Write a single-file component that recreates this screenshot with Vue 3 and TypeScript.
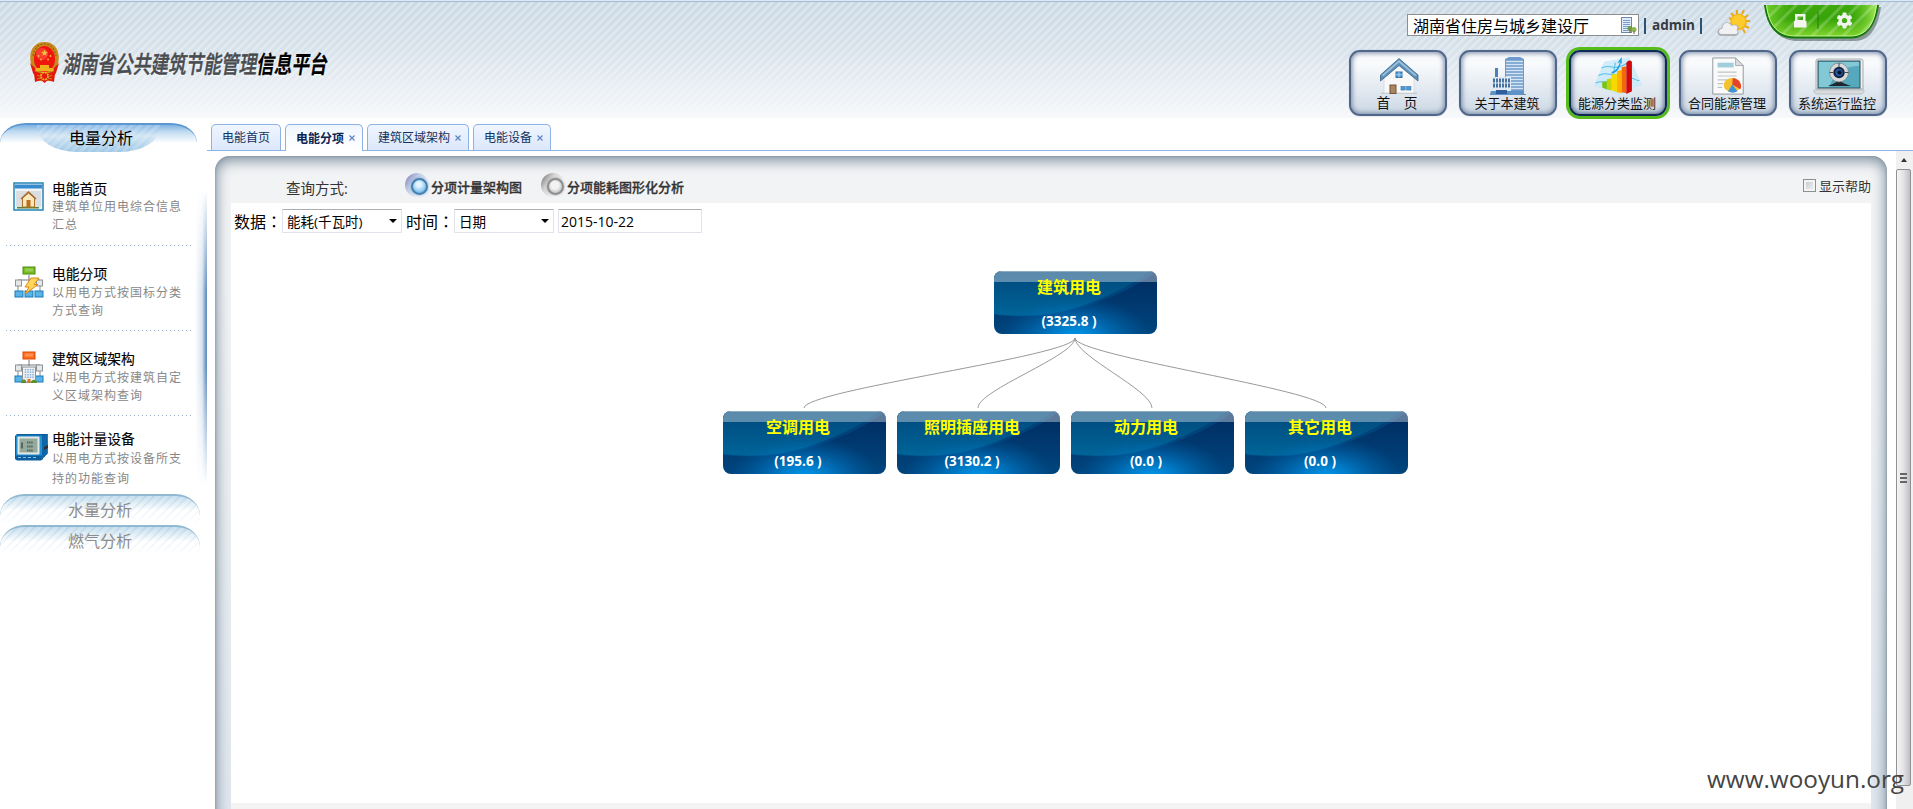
<script setup lang="ts">
interface NavItem { id: string; label: string; active?: boolean }
interface MenuItem { id: string; title: string; lines: string[] }
interface Tab { label: string; closable: boolean; active?: boolean }
interface TreeNode { id: number; x: number; y: number; name: string; value: string }

const navItems: NavItem[] = [
  { id: 'home', label: '首\u3000页' },
  { id: 'building', label: '关于本建筑' },
  { id: 'chart', label: '能源分类监测', active: true },
  { id: 'report', label: '合同能源管理' },
  { id: 'monitor', label: '系统运行监控' },
]

const menuItems: MenuItem[] = [
  { id: 'm-home', title: '电能首页', lines: ['建筑单位用电综合信息', '汇总'] },
  { id: 'm-item', title: '电能分项', lines: ['以用电方式按国标分类', '方式查询'] },
  { id: 'm-area', title: '建筑区域架构', lines: ['以用电方式按建筑自定', '义区域架构查询'] },
  { id: 'm-meter', title: '电能计量设备', lines: ['以用电方式按设备所支', '持的功能查询'] },
]

const tabs: Tab[] = [
  { label: '电能首页', closable: false },
  { label: '电能分项', closable: true, active: true },
  { label: '建筑区域架构', closable: true },
  { label: '电能设备', closable: true },
]

const nodes: TreeNode[] = [
  { id: 0, x: 763, y: 68, name: '建筑用电', value: '(3325.8 )' },
  { id: 1, x: 492, y: 208, name: '空调用电', value: '(195.6 )' },
  { id: 2, x: 666, y: 208, name: '照明插座用电', value: '(3130.2 )' },
  { id: 3, x: 840, y: 208, name: '动力用电', value: '(0.0 )' },
  { id: 4, x: 1014, y: 208, name: '其它用电', value: '(0.0 )' },
]

const links = nodes.slice(1).map((n) => {
  const x = n.x + 81
  return `M844 135 C844 153 ${x} 187 ${x} 205`
})
</script>

<template>
  <div class="page">
    <header class="header">
      <div class="brand">
        <svg class="emblem" width="29" height="41" viewBox="0 0 29 41">
          <path d="M4 27 L1 22 C-2 9 4 0 14.500 0 C25 0 31 9 28 22 L25 27 L24 39 L5 39 Z" fill="#c98a1c" />
          <path d="M3 14 C5 5 9 2 14.500 2 C20 2 24 5 26 14" fill="none" stroke="#8e6212" stroke-width="1.200" stroke-dasharray="2 1.500" />
          <ellipse cx="14.500" cy="17" rx="10.500" ry="13" fill="#f0150f" />
          <ellipse cx="12" cy="12" rx="6" ry="6" fill="#ff5a45" opacity=".6" />
          <path d="M0 21 L5 26 L5 34 L3 31 Z M29 21 L24 26 L24 34 L26 31 Z" fill="#e3180f" />
          <path d="M4 29 L10 31 L19 31 L25 29 L24 40 L18 38 L14.500 41 L11 38 L5 40 Z" fill="#e3180f" />
          <path d="M14.500 7.500 l1 2.300 2.400.1-1.900 1.500.7 2.400-2.200-1.400-2.200 1.400.7-2.400-1.900-1.500 2.400-.1z" fill="#e9c63c" />
          <g fill="#e9b83c"><circle cx="8.500" cy="14" r="1" /><circle cx="20.500" cy="14" r="1" /><circle cx="11" cy="17.500" r="1" /><circle cx="18" cy="17.500" r="1" /></g>
          <path d="M6 29 h17 v-3 h-4 v-3 h-9 v3 h-4z" fill="#eeb21c" />
          <circle cx="14.500" cy="34" r="3.600" fill="none" stroke="#f0b71f" stroke-width="1.800" stroke-dasharray="2 .8" />
          <path d="M7 33 l4 2 M22 33 l-4 2 M7 37 l4-1 M22 37 l-4-1" stroke="#c98a1c" />
        </svg>
        <h1 class="title"><span>湖南省公共建筑节能管理</span><b>信息平台</b></h1>
      </div>

      <div class="head-right">
        <div class="user-row">
          <div class="org">
            <span>湖南省住房与城乡建设厅</span>
            <svg width="16" height="17" viewBox="0 0 16 17">
              <rect x=".5" y=".5" width="10" height="15" fill="#dfeafa" stroke="#6d87ad" />
              <path d="M2 3.500h7M2 5.500h7M2 7.500h7M2 9.500h7M2 11.500h5M2 13.500h5" stroke="#7d9bc8" />
              <circle cx="9" cy="11.500" r="2.500" fill="#6f9a3f" /><circle cx="13" cy="12.500" r="2.500" fill="#8db252" />
              <path d="M9 13v3M13 14v3" stroke="#6c5430" />
            </svg>
          </div>
          <span class="bar"></span><span class="admin">admin</span><span class="bar"></span>
        </div>
        <svg class="weather" width="34" height="28" viewBox="0 0 34 28">
          <path d="M20 1v4M14 4l3 3M27 1l-2 4M31 6l-4 3M33 12h-5M32 19l-4-2M28 24l-2-4M12 9l5 2" stroke="#eca818" stroke-width="2" />
          <circle cx="21.500" cy="13" r="8.300" fill="#f5b411" /><circle cx="21.500" cy="12.500" r="6.800" fill="#fdcc2c" />
          <path d="M5 27 C-1 27 -1 20 4.500 19 C5 13 12 11 15 16 C20 14 24 18 20.500 21 C23 23 21 27 18 27 Z" fill="#aeb1b6" />
          <path d="M5 25 C1 25 1 20 5.500 19.500 C5.500 13.500 12 12 14.500 17 C19 15 22 18 19.500 21 C22 23 20 25 18 25 Z" fill="#f1f1f3" />
        </svg>
        <svg class="tray" width="122" height="37" viewBox="0 0 122 37">
          <defs>
            <linearGradient id="tg" x2="0" y2="1"><stop offset="0" stop-color="#3fa80b" /><stop offset=".45" stop-color="#36a408" /><stop offset="1" stop-color="#80d42c" /></linearGradient>
            <linearGradient id="te" x2="1" y2="0"><stop offset="0" stop-color="#8ade3a" stop-opacity=".7" /><stop offset=".25" stop-color="#5cc41c" stop-opacity="0" /><stop offset=".75" stop-color="#5cc41c" stop-opacity="0" /><stop offset="1" stop-color="#b2f060" stop-opacity=".9" /></linearGradient>
            <pattern id="ts" width="11" height="11" patternUnits="userSpaceOnUse" patternTransform="rotate(45)"><rect width="3" height="11" fill="#fff" opacity=".2" /></pattern>
          </defs>
          <path d="M3 2 C6 24 16 36 35 36 L92 36 C107 36 115 22 118 2 Z" fill="#4b5a57" opacity=".55" />
          <path d="M1 0 C4 22 13 33.500 32 33.500 L88 33.500 C104 33.500 113 20 116 0 Z" fill="#14790a" />
          <path d="M3 0 C6 21 15 31 33 31 L87 31 C104 31 111 19 114 0 Z" fill="url(#tg)" />
          <path d="M3 0 C6 21 15 31 33 31 L87 31 C104 31 111 19 114 0 Z" fill="url(#te)" />
          <path d="M3 0 C6 21 15 31 33 31 L87 31 C104 31 111 19 114 0 Z" fill="url(#ts)" />
          <path d="M3.500 0 C6 21 15 31 33 31 L87 31 C104 31 111 19 113.500 0" fill="none" stroke="#c4f590" />
          <path d="M55 7v17" stroke="#287b08" />
          <path d="M32 16 V9 h10.500 V16 h1 v6.500 h-12.500 v-6.500z M34.500 11.500 v3.500 h5.500 v-3.500z" fill="#f5f5f0" fill-rule="evenodd" />
          <g transform="translate(81.500 15.500)" fill="#f1f3ee"><circle r="6" /><g><rect x="-2" y="-8" width="4" height="16" rx="1" /><rect x="-2" y="-8" width="4" height="16" rx="1" transform="rotate(60)" /><rect x="-2" y="-8" width="4" height="16" rx="1" transform="rotate(120)" /></g><circle r="2.600" fill="#43a90f" /></g>
        </svg>
        <nav class="nav">
          <button v-for="n in navItems" :key="n.id" class="nav-btn" :class="[n.id, { active: n.active }]">
            <svg v-if="n.id === 'home'" width="54" height="38" viewBox="0 0 54 38">
              <path d="M10 35.500h36v1.500H10z" fill="#c7cbd0" />
              <path d="M13 18 L28 5 L43 18 V36 H13Z" fill="#f8f8f9" stroke="#d0d4d8" stroke-width=".7" />
              <path d="M28 1.500 L47 18 V24 L28 8.500 L9.500 24 V18Z" fill="#5c8fb9" stroke="#3b6488" stroke-width=".8" />
              <path d="M28 3 L46 18.500 L44 19 L28 5.500 L12.500 19 L10.500 18.500Z" fill="#9cc0dc" />
              <rect x="25" y="15" width="6" height="5.500" fill="#4c9bdc" stroke="#35719f" /><path d="M28 15v5.500M25 17.700h6" stroke="#bfe0f6" stroke-width=".7" />
              <rect x="19" y="28" width="6" height="8.500" fill="#a98560" stroke="#715437" />
              <g fill="#4c9bdc" stroke="#3d7caf" stroke-width=".7"><rect x="30" y="29.500" width="4.200" height="3.500" /><rect x="35.700" y="29.500" width="4.200" height="3.500" /></g>
            </svg>
            <svg v-else-if="n.id === 'building'" width="54" height="38" viewBox="0 0 54 38">
              <path d="M24 2 L28 0 H39 L43 2 V38 H24Z" fill="#6e9bcb" />
              <path d="M25 4.500h17M25 7.500h17M25 10.500h17M25 13.500h17M25 16.500h17M25 19.500h17M25 22.500h17M25 25.500h17M25 28.500h17M25 31.500h17" stroke="#d4e4f4" stroke-width="1.700" />
              <path d="M11 20h19v16H11z" fill="#dfeaf5" /><path d="M14 11h3v9h-3z" fill="#4c80b8" />
              <path d="M12 23.500h18M12 28.500h18" stroke="#47719f" stroke-width="4" stroke-dasharray="2 1" />
              <path d="M10 34h33v3h2v1H9v-1z" fill="#5e91c6" /><path d="M15 33h11v4H15z" fill="#2f609d" />
            </svg>
            <svg v-else-if="n.id === 'chart'" width="54" height="41" viewBox="0 0 54 41">
              <path d="M12 5 L39 0 L53 30 L28 41 L1 31Z" fill="#c8e8f8" opacity=".8" />
              <path d="M9 12 C18 6 22 17 38 6 M6 20 C15 14 21 24 32 16 M3 28 C14 23 18 33 29 27 M38 24 C44 20 46 27 50 25 M24 6 L20 34" fill="none" stroke="#56bfe8" stroke-width="1.200" />
              <path d="M20 16 C25 15 28 10 29 5 L26 7 L31 0 L31 8 L30 6 C29 12 26 17 20 18Z" fill="#1b9be3" />
              <path d="M10 27 l5-1v9 l-5-2z" fill="#77c411" /><path d="M15 24l5-1v13l-5-1z" fill="#bed50c" /><path d="M20 19l6-1v20l-6-2z" fill="#f7d900" /><path d="M26 15l5-1v25l-5-1z" fill="#ffaf05" /><path d="M31 11l5-1v29l-5-1z" fill="#f36707" />
              <path d="M36 7c1-4 6-4 6-1v31l-6 3z" fill="#d2060b" />
            </svg>
            <svg v-else-if="n.id === 'report'" width="54" height="40" viewBox="0 0 54 40">
              <path d="M11 1 H35 L43 9 V39 H11Z" fill="#fafafa" stroke="#8f9398" /><path d="M35 1v8h8z" fill="#dcdddf" stroke="#a7a9ad" />
              <path d="M16 6h17v5H16z" fill="#a2cddd" /><path d="M16 16h20M16 20h20M16 24h13M16 28h6M16 32h5" stroke="#bfc3c7" stroke-width="1.300" />
              <ellipse cx="31.500" cy="29.500" rx="9" ry="7.500" fill="#f7c12c" /><path d="M31.500 29 L32 22 C40 23 42 30 40 34Z" fill="#e7422d" /><path d="M31.500 29 L37 36 C34 38 30 38 27 36Z" fill="#3f94d8" />
            </svg>
            <svg v-else width="54" height="38" viewBox="0 0 54 38">
              <path d="M5 4 q0-2 2-2 H50 q2 0 2 2 V32 H5Z" fill="#eef0f2" stroke="#a6acb1" /><rect x="7" y="4" width="42" height="27" fill="#55a9bd" stroke="#33515d" />
              <path d="M8 5 h40 v4 Q26 9 18 30 H8Z" fill="#97d6e0" opacity=".7" /><path d="M3 33h50v2l-2 2H5l-2-2z" fill="#d9dcdf" stroke="#a9aeb2" stroke-width=".6" />
              <path d="M17 29 C21 27 25 26 28 23 C31 26 35 27 40 29Z" fill="#20262b" />
              <circle cx="28" cy="15.500" r="9.500" fill="#d7d9dc" stroke="#777c82" stroke-width=".7" /><circle cx="28" cy="15.500" r="5.700" fill="#16243c" /><circle cx="28" cy="15.500" r="3.700" fill="#1e57a8" /><circle cx="28.500" cy="15.500" r="2" fill="#08101c" /><path d="M28 6v4M18.500 15.500h4M33.500 15.500h4" stroke="#454b52" />
            </svg>
            <span>{{ n.label }}</span>
          </button>
        </nav>
      </div>
    </header>

    <div class="body">
      <aside class="side">
        <div class="side-head"><div class="pill">电量分析</div></div>
        <ul class="menu">
          <li v-for="m in menuItems" :key="m.id" :class="m.id">
            <div class="menu-icon">
              <svg v-if="m.id === 'm-home'" width="36" height="32" viewBox="0 0 36 32">
                <rect x="1" y="1" width="29" height="27" fill="#f3f4f5" stroke="#2584b4" stroke-width="1.500" /><rect x="2" y="2.500" width="27" height="4" fill="#368bd0" /><path d="M3 9h25v16H3z" fill="#dbdee1" />
                <path d="M4 25h22v1.500H4z" fill="#55852e" /><path d="M9.500 16 L15.500 11 L21.500 16 V25H9.500Z" fill="#fae8bd" stroke="#b07126" /><path d="M8 17 L15.500 10 L23 17" fill="none" stroke="#aa6a2e" stroke-width="1.600" /><path d="M13.500 18h4v7h-4z" fill="#bb701d" />
              </svg>
              <svg v-else-if="m.id === 'm-meter'" width="36" height="32" viewBox="0 0 36 32">
                <path d="M4 1 H35 V20 L28 27.500 H4 L2 26 V3Z" fill="#0d5c9c" /><path d="M27 5 L35 1V20l-7 7z" fill="#1581c8" /><path d="M33 2v20M31 3v21M29 4v23" stroke="#083f75" stroke-width=".8" /><path d="M31 14l4-2v3l-4 2z" fill="#302f34" />
                <path d="M3 2.500h26v20H3z" fill="#2191d4" /><rect x="4.500" y="3.500" width="22" height="18" rx="1" fill="#e2e8e3" /><rect x="6.500" y="5.500" width="18" height="14" fill="#95a99d" />
                <path d="M9 9.500v6" stroke="#55675e" stroke-width="2" /><path d="M14 9.500h6M14 13.500h6M14 17.500h6" stroke="#55675e" stroke-width="2" stroke-dasharray="1.500 .6" /><path d="M5 24.500h20" stroke="#7dc5ef" stroke-width="1" stroke-dasharray="3 2" />
              </svg>
              <svg v-else width="36" height="34" viewBox="0 0 36 34">
                <path d="M16 9v6M5 17v-3h22v3" fill="none" stroke="#77797c" />
                <rect x="10" y="1" width="12" height="7" :fill="m.id === 'm-item' ? '#78bd1c' : '#ff6c1c'" :stroke="m.id === 'm-item' ? '#4d8a15' : '#db4a08'" /><path d="M12 2.500h8v3h-8z" fill="#fff" opacity=".25" />
                <g fill="#e5e7e9" stroke="#8f9498"><rect x="2.500" y="14" width="6" height="6" /><rect x="23.500" y="14" width="6" height="6" /></g><path d="M5 20v5M27 20v5M16 20v5" stroke="#888" />
                <g fill="#58b4e8" stroke="#1c78b6"><rect x="2" y="25" width="8" height="6" /><rect x="12" y="25" width="8" height="6" /><rect x="22" y="25" width="8" height="6" /></g>
                <path v-if="m.id === 'm-item'" d="M18 12 L26 12 L21 18.500 H25 L12 28 L16 21 H12Z" fill="#ffd65c" stroke="#dc8a14" />
                <g v-else><rect x="9.500" y="16" width="13" height="15" fill="#eef1f3" stroke="#8a8f94" /><path d="M12.500 18v9M15 18v9M17.500 18v9M20 18v9" stroke="#8cb0d6" stroke-width="1.500" stroke-dasharray="1.500 1" /><path d="M8 31c1-3 4-3 5-1v2H8zM18 31c1-3 5-3 6 0v1h-6z" fill="#5f9029" /><path d="M14.500 28h3v4h-3z" fill="#d7791b" /></g>
              </svg>
            </div>
            <div class="menu-text">
              <h2>{{ m.title }}</h2>
              <p v-for="l in m.lines" :key="l">{{ l }}</p>
            </div>
          </li>
        </ul>
        <div class="side-foot">水量分析</div>
        <div class="side-foot">燃气分析</div>
        <div class="splitter"></div>
      </aside>

      <main class="main">
        <div class="tabs">
          <div v-for="t in tabs" :key="t.label" class="tab" :class="{ on: t.active }">
            <span>{{ t.label }}</span>
            <svg v-if="t.closable" width="6" height="6" viewBox="0 0 6 6"><path d="M.5.5l5 5M5.500.5l-5 5" stroke="#5c84c4" stroke-width="1.200" /></svg>
          </div>
        </div>
        <div class="view">
          <section class="panel">
            <div class="modes">
              <span class="mode-label">查询方式:</span>
              <span class="orb blue"><i></i></span><b class="first">分项计量架构图</b>
              <span class="orb"><i></i></span><b>分项能耗图形化分析</b>
              <label class="help"><span class="check"></span>显示帮助</label>
            </div>
            <div class="content">
              <div class="filters">
                <span class="f-label">数据<span class="colon">：</span></span>
                <div class="select energy"><span>能耗(千瓦时)</span><i></i></div>
                <span class="f-label">时间<span class="colon">：</span></span>
                <div class="select period"><span>日期</span><i></i></div>
                <div class="select date"><span>2015-10-22</span></div>
              </div>
              <svg class="links" width="1640" height="300" viewBox="0 0 1640 300">
                <path v-for="d in links" :key="d" :d="d" fill="none" stroke="#999" stroke-width="1" />
              </svg>
              <div v-for="n in nodes" :key="n.id" class="node" :style="{ left: n.x + 'px', top: n.y + 'px' }">
                <svg class="node-bg" width="163" height="63" viewBox="0 0 163 63">
                  <defs>
                    <linearGradient :id="'sw' + n.id" x2="0" y2="1"><stop offset="0" stop-color="#00497c" /><stop offset="1" stop-color="#006a9d" /></linearGradient>
                    <radialGradient :id="'gl' + n.id" gradientUnits="userSpaceOnUse" cx="0" cy="0" r="1" gradientTransform="translate(81 66) scale(76 40)"><stop offset="0" stop-color="#0099ee" /><stop offset=".3" stop-color="#0086d6" stop-opacity=".85" /><stop offset="1" stop-color="#0066b0" stop-opacity="0" /></radialGradient>
                    <linearGradient :id="'bs' + n.id" x2="0" y2="1"><stop offset="0" stop-color="#002c60" /><stop offset="1" stop-color="#00457d" /></linearGradient>
                  </defs>
                  <rect width="163" height="63" :fill="`url(#bs${n.id})`" />
                  <path d="M0 0H163C142 17 102 35 66 42C39 47 15 46 0 44Z" fill="#004e88" opacity=".55" />
                  <path d="M0 0H156C134 18 92 36 60 42C37 46 15 45 0 43Z" :fill="`url(#sw${n.id})`" opacity=".85" />
                  <rect width="163" height="63" :fill="`url(#gl${n.id})`" />
                  <rect width="163" height="11" fill="#fff" opacity=".36" />
                  <path d="M0 .5H163" stroke="#fff" opacity=".3" />
                </svg>
                <strong>{{ n.name }}</strong>
                <em>{{ n.value }}</em>
              </div>
            </div>
          </section>
          <div class="scroll">
            <div class="arrow"></div>
            <div class="thumb"><i></i><i></i><i></i></div>
          </div>
        </div>
      </main>
    </div>
    <div class="watermark">www.wooyun.org</div>
  </div>
</template>

<style>
body { margin: 0; overflow: hidden; background: #fff; }
</style>

<style scoped>
* { box-sizing: border-box; }
.page { position: relative; width: 1913px; height: 809px; overflow: hidden; background: #fff; color: #000; font-family: "Open Sans", "Noto Sans CJK SC", sans-serif; white-space: nowrap; }
h1, h2, p, ul { margin: 0; padding: 0; font-weight: normal; list-style: none; }
svg { display: block; flex: none; }

.header { height: 118px; display: flex; justify-content: space-between; border-top: 1px solid #dce9f5; box-shadow: inset 0 1px #a3bed5;
  background: linear-gradient(to bottom, rgba(249,250,252,0) 0, rgba(249,250,252,.25) 40%, rgba(249,250,252,.95) 100%), repeating-linear-gradient(135deg, #cddae4 0, #cddae4 2.800px, #dbe6ef 3.600px, #dbe6ef 5px, #cddae4 5.657px); }
.brand { display: flex; align-items: flex-start; padding: 41px 0 0 30px; }
.title { width: 270px; height: 36px; margin: 4px 0 0 4px; line-height: 36px; font-size: 24px; transform: scaleX(.735) skewX(-13deg); transform-origin: 0 60%; color: #484c50; font-weight: 500; -webkit-text-stroke: .5px #484c50; text-shadow: 0 1px 2px #fff; }
.title b { color: #000; font-weight: 700; -webkit-text-stroke: .2px #000; }
.head-right { position: relative; width: 564px; display: flex; flex-direction: column; }
.user-row { display: flex; align-items: center; height: 36px; padding: 10px 0 0 58px; }
.org { width: 232px; height: 22px; margin-top: 2px; padding: 3px 1px 0 5px; overflow: hidden; display: flex; justify-content: space-between; border: 1px solid #8c8f92; background: #fff; font-size: 16px; line-height: 17px; }
.org svg { margin-top: -1px; }
.bar { width: 2px; height: 16px; margin: 3px 0 0 5px; background: #285375; }
.admin { margin: 1px 0 0 6px; width: 43px; font-size: 13.500px; font-weight: 700; color: #333a42; }
.weather { position: absolute; left: 368px; top: 8px; }
.tray { position: absolute; left: 414px; top: 4px; }
.nav { display: flex; gap: 12px; padding-top: 13px; }
.nav-btn { width: 98px; height: 66px; padding: 5px 0 0; display: flex; flex-direction: column; align-items: center; border: 2px solid #51678a; border-radius: 11px; background: linear-gradient(#f8fafc 20%, #ccd8e5); box-shadow: inset 0 0 5px 1px #7788a4, 0 0 1px #91a2b8; color: #111; font: 13px/20px "Open Sans", "Noto Sans CJK SC", sans-serif; }
.nav-btn svg { height: 38px; overflow: visible; }
.nav-btn span { margin-top: -2px; margin-left: -2px; }
.nav-btn.home span { font-size: 13.700px; }
.nav-btn.active { border-color: #102a55; box-shadow: inset 0 0 5px 1px #4b6284, 0 0 0 3px #55bd1a; }

.body { display: flex; height: 691px; }
.side { position: relative; width: 207px; padding-top: 5px; flex: none; }
.side-head { width: 197px; height: 29px; padding: 0 37px; border-top: 2px solid #5c97d2; border-radius: 26px 26px 0 0 / 20px 20px 0 0; background: linear-gradient(#7fb3e2 0, #c3dcf1 7px, rgba(255,255,255,0) 18px); }
.pill { height: 27px; line-height: 27px; text-align: center; font-size: 16px; border-radius: 0 0 40px 40px / 0 0 25px 25px; background: repeating-linear-gradient(135deg, rgba(255,255,255,.16) 0 3px, transparent 3px 6px), linear-gradient(#8dbce6, #d2e5f3 40%, #9fc8e6); padding-left: 5px; }
.menu { height: 342px; }
.menu li { display: flex; margin-left: 6px; width: 186px; height: 85px; padding-top: 19px; background: repeating-linear-gradient(90deg, #9cb3cd 0 1px, transparent 1px 4px) 0 100% / 100% 1px no-repeat; }
.menu .m-home { height: 94px; padding-top: 27px; }
.menu .m-meter { background: none; height: 78px; padding-top: 13px; }
.menu-icon { width: 46px; padding: 1px 0 0 7px; flex: none; }
.m-meter .menu-icon { padding-top: 4px; }
.m-home .menu-icon { padding-top: 3px; }
.menu h2 { font-size: 13.800px; line-height: 20px; height: 19px; -webkit-text-stroke: .15px #000; }
.menu .m-item h2, .menu .m-area h2 { line-height: 17px; }
.menu p { font-size: 12px; letter-spacing: 1px; line-height: 18px; color: #888; }
.m-meter p { line-height: 20px; }
.m-meter h2 + p { margin-top: 1px; }
.side-foot { width: 200px; height: 31px; padding-left: 68px; font-size: 16px; line-height: 28px; color: #8c8c8c; border-top: 2px solid #92b9d2; border-radius: 24px 24px 0 0 / 22px 22px 0 0; background: linear-gradient(rgba(170,206,228,.65), rgba(255,255,255,.7) 50%, #fff), repeating-linear-gradient(135deg, #cfe3ef 0 2px, #fff 2px 6px); }
.splitter { position: absolute; right: 0; top: 72px; width: 12px; height: 295px; background: linear-gradient(90deg, rgba(255,255,255,0), #d5e1ee 60%, #7ba0c8 85%, #5d8abb); -webkit-mask-image: linear-gradient(transparent, #000 35%, #000 60%, transparent); mask-image: linear-gradient(transparent, #000 35%, #000 60%, transparent); }

.main { flex: 1; min-width: 0; padding-top: 6px; }
.tabs { display: flex; gap: 4px; height: 27px; padding-left: 4px; border-bottom: 1px solid #8db2e3; }
.tab { display: flex; align-items: center; gap: 5px; height: 26px; padding: 0 7px 0 10px; border: 1px solid #8db2e3; border-bottom: 0; border-radius: 5px 5px 0 0; background: linear-gradient(#f0f6ff, #dbe7fb); color: #14305e; font-size: 12px; }
.tab span { margin-top: -1px; }
.tab:first-child { width: 70px; }
.tab.on { height: 27px; background: linear-gradient(#f0f6ff, #fff); font-weight: 700; color: #0c2450; }
.view { display: flex; height: 658px; justify-content: space-between; padding-left: 8px; }
.panel { width: 1672px; height: 670px; margin-top: 5px; padding: 10px 16px 0; border-radius: 15px 15px 0 0; background: linear-gradient(#f2f3f5 20%, #dfe6ee); box-shadow: inset 0 0 3px #7b8b99, inset 0 3px 13px 2px #8495a4; }
.modes { display: flex; align-items: center; height: 37px; padding-left: 55px; font-size: 13px; color: #333; }
.mode-label { width: 119px; font-size: 14.500px; padding-top: 5px; }
.modes b { margin-left: 2px; padding-top: 5px; line-height: 20px; font-weight: 500; -webkit-text-stroke: .3px #333; }
.modes b.first { width: 110px; }
.orb { width: 24px; height: 24px; padding: 5px 0 0 6px; border-radius: 50%; background: linear-gradient(125deg, #777 5%, #d4d4d4 35%, #f2f3f5 70%); }
.orb i { display: block; width: 17px; height: 17px; border: 2px solid #8d8d8d; border-radius: 50%; background: radial-gradient(circle at 45% 40%, #f2f2f2 35%, #a7a7a7); box-shadow: 0 0 2px #888; }
.orb.blue { background: linear-gradient(125deg, #8583bd 5%, #bfcbe5 35%, #f2f3f5 70%); }
.orb.blue i { border-color: #447fae; background: radial-gradient(circle at 45% 35%, #e3f5ff 20%, #74b8ea 75%); box-shadow: 0 0 3px #6fa7d3; }
.help { display: flex; align-items: center; gap: 3px; margin: 2px 0 0 auto; height: 20px; }
.check { width: 13px; height: 13px; border: 1px solid #8e8f8f; background: linear-gradient(135deg, #bfc5cf, #f6f6f6); box-shadow: inset 0 0 0 2px #f4f4f4; }
.content { position: relative; height: 600px; background: #fff; box-shadow: 0 6px #f3f3f3; }
.filters { display: flex; align-items: center; padding: 6px 0 0 3px; height: 29px; }
.f-label { width: 48px; font-size: 16px; line-height: 22px; padding-top: 1px; }
.colon { font-family: "Noto Sans CJK TC", sans-serif; }
.select { display: flex; align-items: center; justify-content: space-between; height: 24px; padding: 1px 4px 0 4px; border: 1px solid #e2e3ea; border-top-color: #abadb3; background: #fff; font-size: 13.500px; border-radius: 1px; }
.select i { border: 4px solid transparent; border-top-color: #000; border-bottom: 0; }
.energy { width: 120px; margin-right: 4px; }
.period { width: 100px; margin-right: 4px; }
.date { width: 144px; padding-left: 2px; font-size: 14px; }
.links { position: absolute; left: 0; top: 0; }
.node { position: absolute; width: 163px; height: 63px; padding-right: 13px; overflow: hidden; border-radius: 8px; display: flex; flex-direction: column; text-align: center; }
.node-bg { position: absolute; left: 0; top: 0; }
.node strong { position: relative; height: 40px; line-height: 32px; font-size: 16px; font-weight: 700; color: #ff0; }
.node em { position: relative; font-style: normal; font-weight: 700; font-size: 13.500px; line-height: 21px; color: #fff; }
.scroll { width: 17px; height: 658px; background: #f0f0f0; display: flex; flex-direction: column; }
.arrow { margin: 7px 0 7px 5px; width: 0; border: 3px solid transparent; border-bottom: 4px solid #333; border-top: 0; height: 4px; }
.thumb { width: 15px; height: 617px; border: 1px solid #8f9194; border-radius: 2px; background: linear-gradient(90deg, #f6f6f6, #e3e3e5 50%, #bfbfc4); display: flex; flex-direction: column; align-items: center; justify-content: center; gap: 2px; }
.thumb i { width: 7px; height: 2px; background: #666; }
.watermark { position: absolute; left: 1707px; top: 762px; font-size: 24.300px; line-height: 34px; color: #444; }
</style>
